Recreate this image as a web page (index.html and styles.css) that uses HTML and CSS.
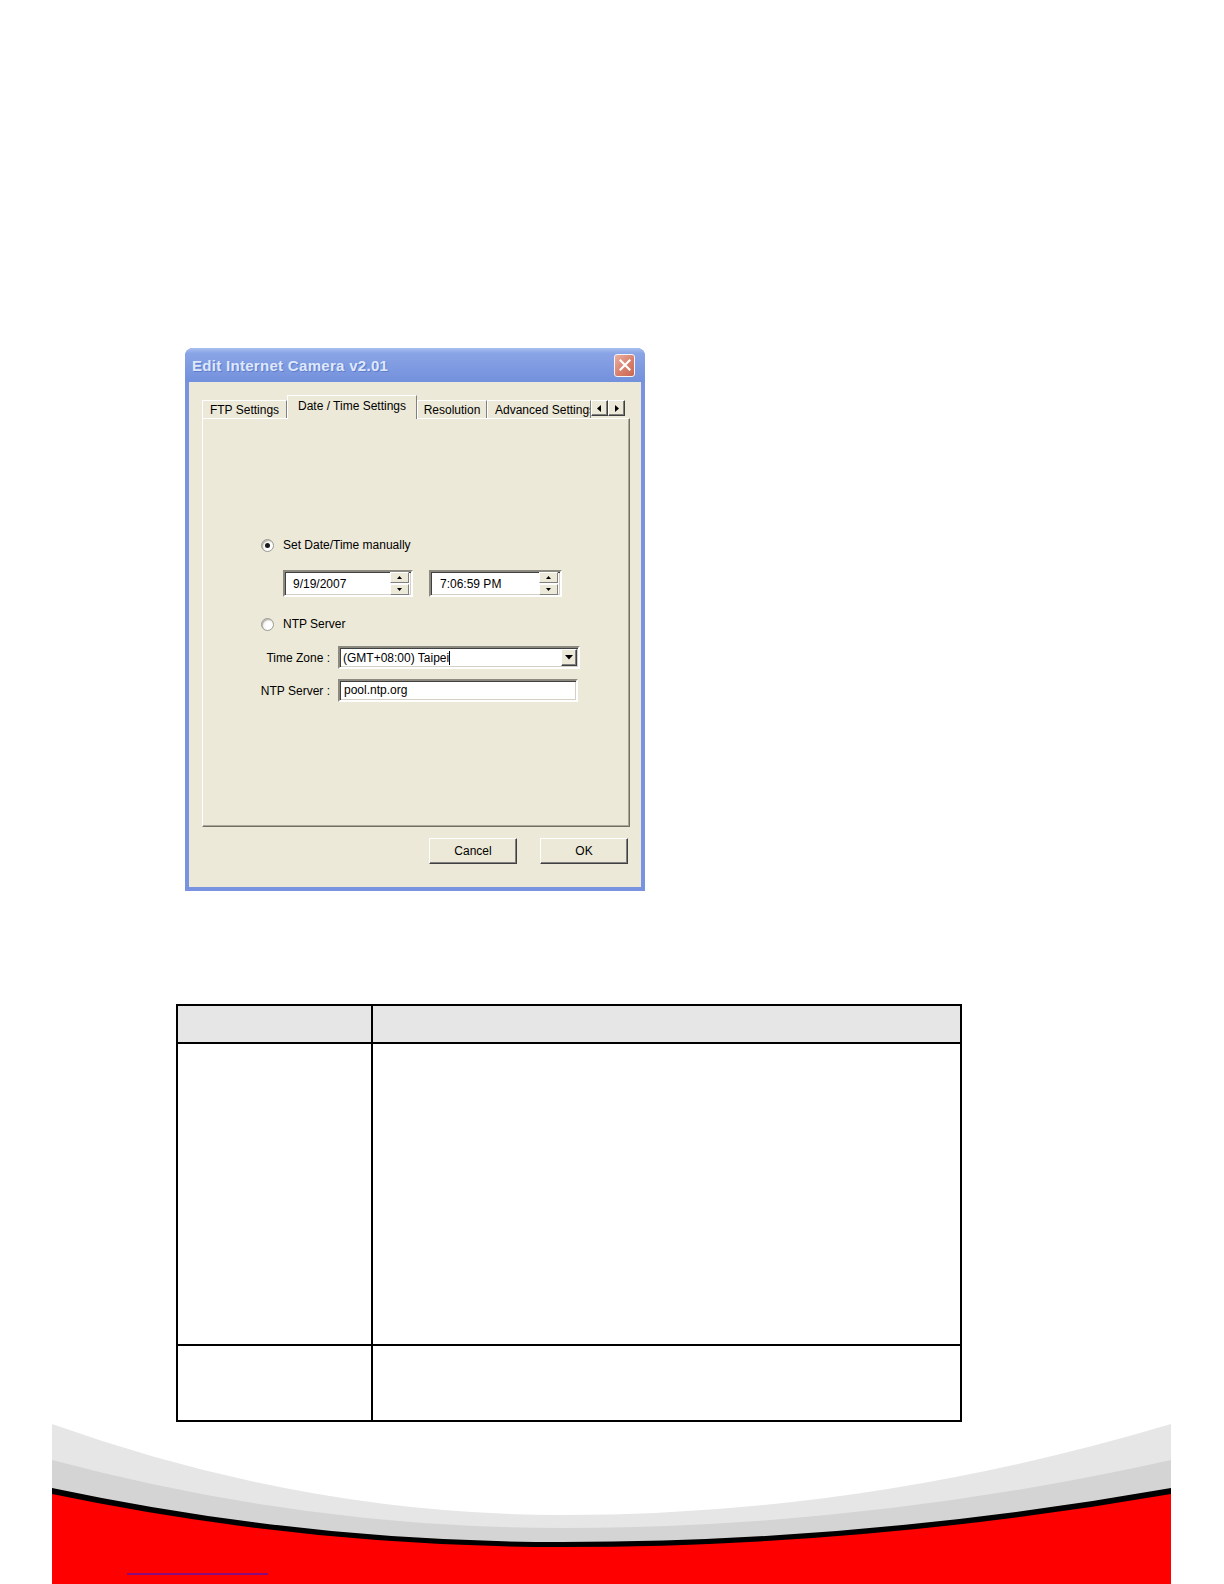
FILE: index.html
```html
<!DOCTYPE html>
<html lang="en">
<head>
  <meta charset="UTF-8" />
  <title>Edit Internet Camera - Date / Time Settings</title>
  <link rel="stylesheet" href="styles.css">
</head>
<body>
  <div class="page">
    <div class="window">
      <div class="titlebar">
        <span class="title">Edit Internet Camera v2.01</span>
        <span class="close">
          <svg width="12" height="12" viewBox="0 0 12 12"><path d="M1.5 1.5 L10.5 10.5 M10.5 1.5 L1.5 10.5" stroke="#fff" stroke-width="2.2" stroke-linecap="square"/></svg>
        </span>
      </div>
      <div class="client">
        <div class="tabs">
          <div class="tab tab-ftp">FTP Settings</div>
          <div class="tab tab-active">Date / Time Settings</div>
          <div class="tab tab-res">Resolution</div>
          <div class="tab tab-adv">Advanced Settings</div>
          <div class="tab-scroll">
            <span class="scroll-btn"><svg width="5" height="7" viewBox="0 0 5 7"><path d="M4 0 L0 3.5 L4 7 Z" fill="#000"/></svg></span>
            <span class="scroll-btn"><svg width="5" height="7" viewBox="0 0 5 7"><path d="M1 0 L5 3.5 L1 7 Z" fill="#000"/></svg></span>
          </div>
        </div>
        <div class="panel">
          <div class="radio-row">
            <span class="radio checked"></span>
            <span>Set Date/Time manually</span>
          </div>
          <div class="spin-row">
            <div class="field spin date">
              <span class="spin-text">9/19/2007</span>
              <span class="spinner">
                <span class="spin-btn"><svg width="5" height="3" viewBox="0 0 5 3"><path d="M2.5 0 L5 3 L0 3 Z" fill="#000"/></svg></span>
                <span class="spin-btn"><svg width="5" height="3" viewBox="0 0 5 3"><path d="M0 0 L5 0 L2.5 3 Z" fill="#000"/></svg></span>
              </span>
            </div>
            <div class="field spin time">
              <span class="spin-text">7:06:59 PM</span>
              <span class="spinner">
                <span class="spin-btn"><svg width="5" height="3" viewBox="0 0 5 3"><path d="M2.5 0 L5 3 L0 3 Z" fill="#000"/></svg></span>
                <span class="spin-btn"><svg width="5" height="3" viewBox="0 0 5 3"><path d="M0 0 L5 0 L2.5 3 Z" fill="#000"/></svg></span>
              </span>
            </div>
          </div>
          <div class="radio-row radio-ntp">
            <span class="radio"></span>
            <span>NTP Server</span>
          </div>
          <div class="field-row tz-row">
            <span class="label">Time Zone :</span>
            <div class="field select">
              <span class="select-text">(GMT+08:00) Taipei<span class="caret"></span></span>
              <span class="drop-btn"><svg width="8" height="5" viewBox="0 0 8 5"><path d="M0 0 L8 0 L4 4.5 Z" fill="#000"/></svg></span>
            </div>
          </div>
          <div class="field-row ntp-row">
            <span class="label">NTP Server :</span>
            <div class="field text-input">pool.ntp.org</div>
          </div>
        </div>
        <div class="buttons">
          <div class="btn">Cancel</div>
          <div class="btn">OK</div>
        </div>
      </div>
    </div>

    <table class="info">
      <tr class="head"><td class="col-a"></td><td class="col-b"></td></tr>
      <tr class="tall"><td></td><td></td></tr>
      <tr class="short"><td></td><td></td></tr>
    </table>

    <div class="footer">
      <svg width="1119" height="160" viewBox="0 0 1119 160">
        <path d="M0 0 Q255 91 510 91 Q814 91 1119 0 L1119 160 L0 160 Z" fill="#e6e6e6"/>
        <path d="M0 36 Q255 104 510 104 Q814 104 1119 36 L1119 160 L0 160 Z" fill="#d4d4d4"/>
        <path d="M0 64 Q255 118 510 118 Q814 118 1119 64 L1119 160 L0 160 Z" fill="#000"/>
        <path d="M0 70 Q255 123 510 123 Q814 123 1119 70 L1119 160 L0 160 Z" fill="#ff0000"/>
      </svg>
      <span class="footer-link"></span>
    </div>
  </div>
</body>
</html>
```

FILE: styles.css
```css
html, body {
  margin: 0;
  background: #fff;
}
body {
  font-family: "Liberation Sans", Arial, sans-serif;
  font-size: 12px;
  color: #000;
}
.page {
  height: 1584px;
  overflow: hidden;
  padding-top: 348px;
  box-sizing: border-box;
}

/* dialog window */
.window {
  width: 460px;
  margin-left: 185px;
  padding-bottom: 4px;
  background: #7a93e0;
  border-radius: 8px 8px 0 0;
}
.titlebar {
  height: 34px;
  display: flex;
  align-items: center;
  justify-content: space-between;
  padding: 0 10px 0 7px;
  border-radius: 8px 8px 0 0;
  background: linear-gradient(#a9c0f0, #8aa5e6 15%, #7d99e0 60%, #7391dc);
}
.title {
  font-size: 15px;
  font-weight: bold;
  color: #dfe8fa;
  letter-spacing: 0.3px;
  text-shadow: 1px 1px 0 #5f7ccc;
}
.close {
  width: 19px;
  height: 21px;
  display: flex;
  align-items: center;
  justify-content: center;
  border: 1px solid #f3f3f8;
  border-radius: 3px;
  background: linear-gradient(135deg, #eab0a2, #d8806c 55%, #c96752);
}
.client {
  margin: 0 4px;
  height: 505px;
  background: #ece9d8;
  padding: 13px 11px 0 13px;
  box-sizing: border-box;
}

/* tabs */
.tabs {
  display: flex;
  align-items: flex-end;
  height: 23px;
}
.tab {
  height: 18px;
  line-height: 18px;
  box-sizing: border-box;
  text-align: center;
  white-space: nowrap;
  overflow: hidden;
  border-top: 1px solid #fff;
  border-left: 1px solid #fff;
  border-right: 1px solid #808080;
}
.tab-ftp { width: 85px; }
.tab-active {
  width: 130px;
  height: 24px;
  line-height: 21px;
  margin-bottom: -1px;
  position: relative;
  z-index: 1;
  background: #ece9d8;
}
.tab-res { width: 70px; }
.tab-adv {
  width: 104px;
  text-align: left;
  padding-left: 7px;
}
.tab-scroll {
  display: flex;
  margin: 0 4px 2px 0;
}
.scroll-btn {
  width: 17px;
  height: 16px;
  box-sizing: border-box;
  display: flex;
  align-items: center;
  justify-content: center;
  background: #ece9d8;
  border: 1px solid;
  border-color: #fff #404040 #404040 #fff;
  box-shadow: inset -1px -1px #808080;
}

/* tab page */
.panel {
  height: 409px;
  box-sizing: border-box;
  border: 1px solid;
  border-color: #fff #716f64 #716f64 #fff;
  box-shadow: inset -1px -1px #aca899;
  padding: 118px 0 0 47px;
}
.radio-row {
  display: flex;
  align-items: center;
  gap: 9px;
  height: 16px;
  margin-left: 11px;
}
.radio {
  width: 13px;
  height: 13px;
  box-sizing: border-box;
  border-radius: 50%;
  border: 1px solid #9a9a94;
  background: radial-gradient(circle at 65% 65%, #fff 35%, #d6d4cc);
  box-shadow: inset 1px 1px #b8b6ae;
  position: relative;
}
.radio.checked::after {
  content: "";
  position: absolute;
  left: 3px;
  top: 3px;
  width: 5px;
  height: 5px;
  border-radius: 50%;
  background: #1a1a1a;
}
.radio-ntp { margin-top: 19px; }

.field {
  box-sizing: border-box;
  background: #fff;
  border: 2px solid;
  border-color: #8c8a80 #fff #fff #8c8a80;
  box-shadow: inset 1px 1px #404040, inset -1px -1px #d4d0c8;
}
.spin-row {
  display: flex;
  gap: 16px;
  margin: 17px 0 0 33px;
}
.spin {
  height: 27px;
  display: flex;
  align-items: center;
  padding: 0 2px 0 8px;
}
.date { width: 130px; }
.time { width: 133px; padding-left: 9px; }
.spin-text { flex: 1; }
.spinner {
  display: flex;
  flex-direction: column;
  gap: 1px;
}
.spin-btn {
  width: 19px;
  height: 11px;
  box-sizing: border-box;
  display: flex;
  align-items: center;
  justify-content: center;
  background: #ece9d8;
  border: 1px solid;
  border-color: #fff #808080 #808080 #fff;
}

.field-row {
  display: flex;
  align-items: center;
  gap: 8px;
}
.tz-row { margin-top: 14px; }
.ntp-row { margin-top: 10px; }
.label {
  width: 80px;
  text-align: right;
}
.select {
  width: 242px;
  height: 23px;
  display: flex;
  align-items: center;
  padding: 0 1px 0 3px;
}
.select-text { flex: 1; }
.caret {
  display: inline-block;
  width: 1px;
  height: 14px;
  background: #000;
  vertical-align: -3px;
}
.drop-btn {
  width: 16px;
  height: 17px;
  box-sizing: border-box;
  display: flex;
  align-items: center;
  justify-content: center;
  background: #ece9d8;
  border: 1px solid;
  border-color: #fff #404040 #404040 #fff;
  box-shadow: inset -1px -1px #808080;
}
.text-input {
  width: 240px;
  height: 23px;
  line-height: 19px;
  padding-left: 4px;
}

.buttons {
  display: flex;
  justify-content: flex-end;
  gap: 23px;
  margin-top: 11px;
  padding-right: 2px;
}
.btn {
  width: 88px;
  height: 26px;
  box-sizing: border-box;
  line-height: 24px;
  text-align: center;
  background: #ece9d8;
  border: 1px solid;
  border-color: #fff #404040 #404040 #fff;
  box-shadow: inset -1px -1px #808080;
}

/* empty table */
.info {
  margin: 113px 0 0 176px;
  border-spacing: 0;
  border-top: 2px solid #000;
  border-left: 2px solid #000;
}
.info td {
  padding: 0;
  border-right: 2px solid #000;
  border-bottom: 2px solid #000;
}
.info .col-a { width: 193px; }
.info .col-b { width: 587px; }
.head td {
  height: 36px;
  background: #e6e6e6;
}
.tall td { height: 300px; }
.short td { height: 74px; }

/* page footer */
.footer {
  position: relative;
  width: 1119px;
  height: 160px;
  margin: 2px 0 0 52px;
}
.footer svg { display: block; }
.footer-link {
  position: absolute;
  left: 75px;
  top: 149px;
  width: 141px;
  height: 0;
  border-bottom: 2px solid #8a0a80;
}
```
